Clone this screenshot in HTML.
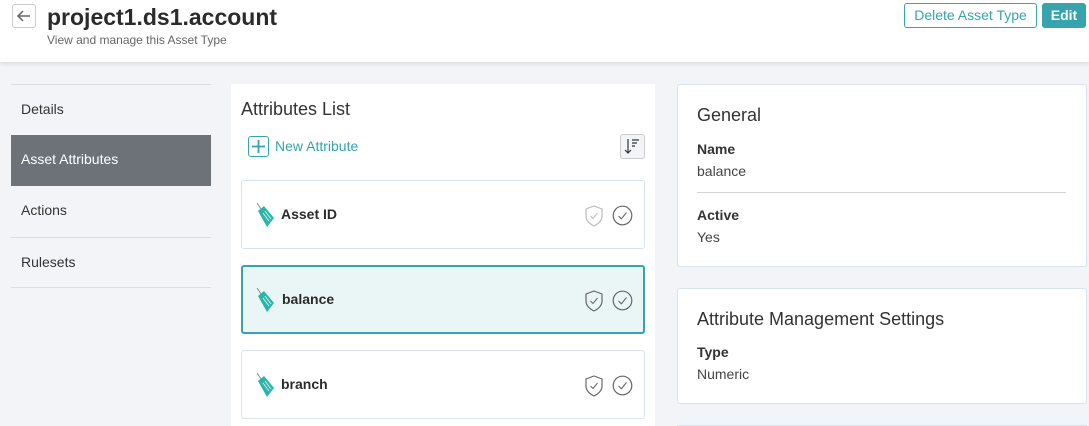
<!DOCTYPE html>
<html><head><style>
*{box-sizing:border-box;margin:0;padding:0}
html,body{width:1089px;height:426px;overflow:hidden}
body{background:#f2f4f7;font-family:"Liberation Sans",Arial,sans-serif;color:#333;position:relative}
.hdr{position:absolute;left:0;top:0;width:1089px;height:62px;background:#fff;box-shadow:0 2px 4px rgba(0,0,0,.1)}
.back{position:absolute;left:12px;top:4px;width:24px;height:24px;border:1px solid #ccc;border-radius:3px}
.title{position:absolute;left:47px;top:4px;font-size:23px;font-weight:bold;color:#2b2b2b}
.sub{position:absolute;left:47px;top:33px;font-size:12px;color:#666}
.btn1{position:absolute;left:904px;top:3px;width:133px;height:25px;border:1px solid #36a3ad;border-radius:3px;color:#36a3ad;font-size:14px;text-align:center;line-height:23px}
.btn2{position:absolute;left:1042px;top:3px;width:44px;height:25px;background:#36a3ad;border-radius:3px;color:#fff;font-size:14px;font-weight:bold;text-align:center;line-height:25px}
.nav{position:absolute;left:11px;width:200px;height:51px;font-size:14px;line-height:49px;padding-left:10px;color:#333;border-top:1px solid #d8dde3}
.nav.act{background:#6d7278;color:#fff;border-top:none}
.mid{position:absolute;left:231px;top:84px;width:424px;height:342px;background:#fff}
.card{position:absolute;left:10px;width:404px;height:69px;border:1px solid #d5e4ef;border-radius:3px;background:#fff}
.card.sel{border:2px solid #36a3ad;background:#e9f6f5}
.card .nm{position:absolute;left:39px;font-size:14px;font-weight:bold;color:#2b2b2b}
.card svg{position:absolute}
.rc{position:absolute;left:677px;width:410px;background:#fff;border:1px solid #d5e4ef;border-radius:3px}
.h{font-size:18px;color:#333;position:absolute;left:19px}
.lb{position:absolute;left:19px;font-size:14px;font-weight:bold;color:#333}
.vl{position:absolute;left:19px;font-size:14px;color:#444}
</style></head><body>
<div class="hdr">
<div class="back"><svg width="22" height="22" viewBox="0 0 22 22"><path d="M17 11H5M10 6L5 11L10 16" stroke="#666" stroke-width="1.5" fill="none"/></svg></div>
<div class="title">project1.ds1.account</div>
<div class="sub">View and manage this Asset Type</div>
<div class="btn1">Delete Asset Type</div>
<div class="btn2">Edit</div>
</div>
<div class="nav" style="top:84px">Details</div>
<div class="nav act" style="top:135px">Asset Attributes</div>
<div class="nav" style="top:186px;border-top:none">Actions</div>
<div class="nav" style="top:237px">Rulesets</div>
<div style="position:absolute;left:11px;top:287px;width:200px;height:1px;background:#d8dde3"></div>
<div class="mid">
<div style="position:absolute;left:10px;top:15px;font-size:18px;color:#333">Attributes List</div>
<div style="position:absolute;left:17px;top:52px;width:21px;height:21px;border:1px solid #36a3ad;border-radius:3px"><svg width="19" height="19" viewBox="0 0 19 19"><path d="M9.5 3V16M3 9.5H16" stroke="#36a3ad" stroke-width="1.8"/></svg></div>
<div style="position:absolute;left:44px;top:54px;font-size:14px;color:#36a3ad">New Attribute</div>
<div style="position:absolute;left:389px;top:50px;width:25px;height:25px;border:1px solid #ccc;border-radius:3px;background:#f2f4f7"><svg width="23" height="23" viewBox="0 0 23 23"><path d="M7 4V18M4 15L7 18L10 15M11 5H18M11 8H16M11 11H14" stroke="#333" stroke-width="1.2" fill="none"/></svg></div>
</div>
<div id="cards"></div>
<script>
var ys=[180,265,350],ns=["Asset ID","balance","branch"];
var h="";
for(var i=0;i<3;i++){
var off=i==1?-1:0, sc=i==0?"#bbb":"#666";
h+='<div class="card'+(i==1?' sel':'')+'" style="left:241px;top:'+ys[i]+'px">'+
'<svg style="left:'+(12+off)+'px;top:'+(21+off)+'px" width="22" height="26" viewBox="0 0 22 26"><path d="M3 1L7 7" stroke="#888" stroke-width="1"/><path d="M4 9L10 4L20 16L13 25Z" fill="#2bb5a8"/><path d="M9 11L15 19M11 9L17 17" stroke="#cfeeea" stroke-width="1"/></svg>'+
'<div class="nm" style="top:'+(25+off)+'px">'+ns[i]+'</div>'+
'<svg style="left:'+(342+off)+'px;top:'+(24+off)+'px" width="20" height="22" viewBox="0 0 20 22"><path d="M10 1L18 4V11C18 16 14 19 10 21C6 19 2 16 2 11V4Z" stroke="'+sc+'" fill="none" stroke-width="1.2"/><path d="M6.5 11L9 13.5L13.5 8" stroke="'+sc+'" fill="none" stroke-width="1"/></svg>'+
'<svg style="left:'+(370+off)+'px;top:'+(24+off)+'px" width="21" height="21" viewBox="0 0 21 21"><circle cx="10.5" cy="10.5" r="9.3" stroke="#666" fill="none" stroke-width="1.2"/><path d="M6.5 11L9.3 13.8L14.5 7.5" stroke="#666" fill="none" stroke-width="1.1"/></svg></div>';
}
document.getElementById("cards").innerHTML=h;
</script>
<div class="rc" style="top:84px;height:183px">
<div class="h" style="top:20px">General</div>
<div class="lb" style="top:56px">Name</div>
<div class="vl" style="top:78px">balance</div>
<div style="position:absolute;left:19px;top:107px;width:369px;height:1px;background:#d5d5d5"></div>
<div class="lb" style="top:122px">Active</div>
<div class="vl" style="top:144px">Yes</div>
</div>
<div class="rc" style="top:288px;height:116px">
<div class="h" style="top:20px">Attribute Management Settings</div>
<div class="lb" style="top:55px">Type</div>
<div class="vl" style="top:77px">Numeric</div>
</div>
<div class="rc" style="top:425px;height:1px;border-bottom:none"></div>
</body></html>
